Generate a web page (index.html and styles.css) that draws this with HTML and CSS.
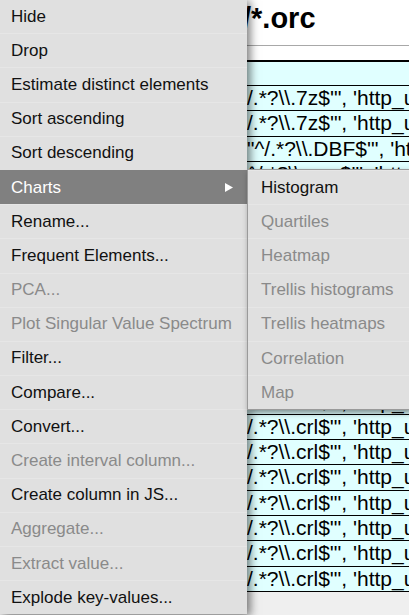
FILE: index.html
```html
<!DOCTYPE html>
<html>
<head>
<meta charset="utf-8">
<link rel="stylesheet" href="styles.css">
</head>
<body>
<div class="page">
  <h1 class="title">/*.orc</h1>
  <div class="rule"></div>
  <div class="table">
    <div class="thead"></div>
    <div class="row">/.*?\\.7z$'", 'http_url')</div>
    <div class="row">/.*?\\.7z$'", 'http_url')</div>
    <div class="row">"^/.*?\\.DBF$'", 'http_url')</div>
    <div class="row">^/.*?\\.exe$'", 'http_url')</div>
    <div class="row">/.*?\\.crl$'", 'http_url')</div>
    <div class="row">/.*?\\.crl$'", 'http_url')</div>
    <div class="row">/.*?\\.crl$'", 'http_url')</div>
    <div class="row">/.*?\\.crl$'", 'http_url')</div>
    <div class="row">/.*?\\.crl$'", 'http_url')</div>
    <div class="row">/.*?\\.crl$'", 'http_url')</div>
    <div class="row">/.*?\\.crl$'", 'http_url')</div>
    <div class="row">/.*?\\.crl$'", 'http_url')</div>
    <div class="row">/.*?\\.crl$'", 'http_url')</div>
    <div class="row">/.*?\\.crl$'", 'http_url')</div>
    <div class="row">/.*?\\.crl$'", 'http_url')</div>
    <div class="row">/.*?\\.crl$'", 'http_url')</div>
    <div class="row">/.*?\\.crl$'", 'http_url')</div>
    <div class="row">/.*?\\.crl$'", 'http_url')</div>
    <div class="row">/.*?\\.crl$'", 'http_url')</div>
    <div class="row">/.*?\\.crl$'", 'http_url')</div>
  </div>
  <div class="footer"></div>
</div>

<ul class="menu">
  <li class="item">Hide</li>
  <li class="item">Drop</li>
  <li class="item">Estimate distinct elements</li>
  <li class="item">Sort ascending</li>
  <li class="item">Sort descending</li>
  <li class="item active">Charts
    <svg class="arrow" width="8" height="9" viewBox="0 0 8 9"><path d="M0 0 L8 4.5 L0 9 Z" fill="#fff"/></svg>
  </li>
  <li class="item">Rename...</li>
  <li class="item">Frequent Elements...</li>
  <li class="item disabled">PCA...</li>
  <li class="item disabled">Plot Singular Value Spectrum</li>
  <li class="item">Filter...</li>
  <li class="item">Compare...</li>
  <li class="item">Convert...</li>
  <li class="item disabled">Create interval column...</li>
  <li class="item">Create column in JS...</li>
  <li class="item disabled">Aggregate...</li>
  <li class="item disabled">Extract value...</li>
  <li class="item">Explode key-values...</li>
</ul>

<ul class="menu submenu">
  <li class="item sub">Histogram</li>
  <li class="item sub disabled">Quartiles</li>
  <li class="item sub disabled">Heatmap</li>
  <li class="item sub disabled">Trellis histograms</li>
  <li class="item sub disabled">Trellis heatmaps</li>
  <li class="item sub disabled">Correlation</li>
  <li class="item sub disabled">Map</li>
</ul>
</body>
</html>
```

FILE: styles.css
```css
html, body {
  margin: 0;
  padding: 0;
}
body {
  width: 409px;
  height: 615px;
  overflow: hidden;
  position: relative;
  background: #ffffff;
  font-family: "Liberation Sans", Arial, sans-serif;
  color: #000;
}
.page {
  display: flex;
  flex-direction: column;
}
.title {
  margin: 0;
  padding: 2px 0 0 243px;
  height: 43px;
  box-sizing: border-box;
  font-size: 29px;
  font-weight: bold;
  line-height: 33px;
  white-space: nowrap;
}
.rule {
  height: 1px;
  background: #a8a8a8;
  margin-top: 2px;
}
.table {
  margin-top: 14px;
  border-top: 2px solid #000;
  background: #e0ffff;
}
.thead {
  height: 23px;
  border-bottom: 1px solid #000;
}
.row {
  height: 24.3px;
  border-bottom: 1px solid #000;
  padding-left: 247px;
  font-size: 21px;
  line-height: 24px;
  white-space: nowrap;
  overflow: hidden;
}
.footer {
  height: 40px;
  background: #efefef;
}

.menu {
  position: absolute;
  left: 0;
  top: -1px;
  margin: 0;
  padding: 0;
  list-style: none;
  width: 247px;
  background: #e0e0e0;
  box-shadow: 3px 2px 9px rgba(0, 0, 0, 0.55);
  font-size: 17px;
}
.item {
  height: 34.2px;
  box-sizing: border-box;
  display: flex;
  align-items: center;
  justify-content: space-between;
  padding: 0 14px 0 11px;
  color: #111;
  border-top: 1px solid #e6e6e6;
  white-space: nowrap;
}
.item.active {
  background: #808080;
  color: #fff;
  border-top-color: #808080;
}
.item.disabled {
  color: #8a8a8a;
}
.arrow {
  display: block;
}
.submenu {
  left: 247px;
  top: 169px;
  width: 161px;
  border: 1px solid #9a9a9a;
  box-shadow: 2px 3px 6px rgba(0, 0, 0, 0.45);
}
.item.sub {
  padding-left: 13px;
}
```
